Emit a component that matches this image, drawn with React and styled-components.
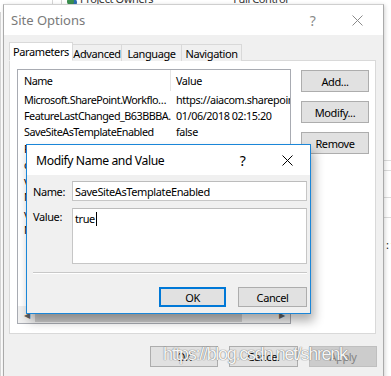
import React from "react";
import styled, { createGlobalStyle } from "styled-components";

const GlobalStyle = createGlobalStyle`
  html, body {
    margin: 0;
    padding: 0;
    background: #ffffff;
  }
  * {
    box-sizing: border-box;
  }
`;

const UI_FONT = `"Segoe UI", "Noto Sans", "Liberation Sans", sans-serif`;

const Screen = styled.div`
  position: relative;
  width: 391px;
  height: 376px;
  overflow: hidden;
  background: #ffffff;
  font-family: ${UI_FONT};
  font-size: 11px;
  letter-spacing: -0.4px;
  color: #000;
`;

/* the SharePoint page lying behind the windows */
const Backdrop = styled.div`
  position: absolute;
  inset: 0;
  display: grid;
  grid-template-columns: 3px 1fr 7px;
  grid-template-rows: 12px 1fr;
`;

const BackTop = styled.div`
  grid-column: 1 / 4;
  display: flex;
  align-items: flex-end;
  height: 12px;
  padding-bottom: 7px;
  line-height: 12px;
  color: #333;
`;

const BackRule = styled.span`
  width: 1px;
  align-self: stretch;
  background: #d6d6d6;
  margin-left: ${(p) => p.$ml}px;
`;

const BackText = styled.span`
  margin-left: ${(p) => p.$ml}px;
  white-space: nowrap;
`;

const BackIcon = styled.span`
  margin-left: 5px;
  width: 7px;
  height: 7px;
  border-radius: 50%;
  background: #3b8f4f;
  box-shadow: 3px 1px 0 #2b6cb0;
`;

const BackLeft = styled.div`
  border-left: 1px solid #d6d6d6;
`;

const BackRight = styled.div`
  grid-column: 3;
  display: flex;
  flex-direction: column;
  padding-top: 148px;
`;

const BackLine = styled.div`
  height: 1px;
  background: #dcdcdc;
  margin-bottom: ${(p) => p.$gap}px;
`;

const BackMark = styled.div`
  margin-top: 19px;
  padding-left: 2px;
  white-space: nowrap;
  color: #222;
`;

const Window = styled.div`
  position: absolute;
  left: ${(p) => p.$x}px;
  top: ${(p) => p.$y}px;
  width: ${(p) => p.$w}px;
  height: ${(p) => p.$h}px;
  display: flex;
  flex-direction: column;
  background: #f0f0f0;
  border: 1px solid ${(p) => (p.$active ? "#1a86d8" : "#aaaaaa")};
  border-top-color: ${(p) => (p.$active ? "#1a86d8" : "#cfcfcf")};
  box-shadow: ${(p) =>
    p.$active
      ? "3px 7px 10px rgba(0,0,0,0.32)"
      : "1px 1px 4px rgba(0,0,0,0.18)"};
`;

const TitleBar = styled.div`
  height: 30px;
  flex: none;
  display: flex;
  align-items: center;
  background: #ffffff;
  padding-left: ${(p) => p.$pl || 7}px;
  padding-right: ${(p) => p.$pr || 0}px;
`;

const TitleText = styled.div`
  flex: 1;
  font-size: ${(p) => (p.$active ? 12.2 : 13)}px;
  letter-spacing: ${(p) => (p.$active ? -0.4 : 0)}px;
  color: ${(p) => (p.$active ? "#000" : "#7a7a7a")};
  white-space: nowrap;
`;

const CaptionButton = styled.div`
  width: 45px;
  height: 30px;
  display: flex;
  align-items: center;
  justify-content: center;
  font-size: 14px;
  color: ${(p) => (p.$active ? "#000" : "#8a8a8a")};
`;

const CloseGlyph = ({ color }) => (
  <svg width="11" height="11" viewBox="0 0 11 11">
    <path d="M0.5 0.5 L10.5 10.5 M10.5 0.5 L0.5 10.5" stroke={color} strokeWidth="1" />
  </svg>
);

const OptionsBody = styled.div`
  flex: 1;
  display: flex;
  flex-direction: column;
  padding: 7px 6px 0 5px;
`;

const Tabs = styled.div`
  display: flex;
  align-items: flex-end;
  height: 19px;
  position: relative;
  z-index: 1;
`;

const Tab = styled.div`
  width: ${(p) => p.$w}px;
  height: ${(p) => (p.$selected ? 19 : 17)}px;
  display: flex;
  align-items: center;
  justify-content: center;
  background: ${(p) => (p.$selected ? "#ffffff" : "#f0f0f0")};
  border: 1px solid #d9d9d9;
  border-bottom: ${(p) => (p.$selected ? "1px solid #ffffff" : "none")};
  border-left: ${(p) => (p.$first || p.$selected ? "1px solid #d9d9d9" : "none")};
  white-space: nowrap;
`;

const Panel = styled.div`
  width: 367px;
  height: 274px;
  margin-top: -1px;
  display: flex;
  gap: 10px;
  padding: 8px 0 0 7px;
  background: #ffffff;
  border: 1px solid #d9d9d9;
`;

const ListView = styled.div`
  width: 274px;
  height: 255px;
  border: 1px solid #a8abb2;
  display: flex;
  flex-direction: column;
  overflow: hidden;
  background: #ffffff;
  font-size: 10.8px;
`;

const ListRow = styled.div`
  display: grid;
  grid-template-columns: 153px 1fr;
  height: ${(p) => (p.$header ? 21 : 16.3)}px;
  align-items: center;
  flex: none;
  white-space: nowrap;
`;

const Cell = styled.div`
  overflow: hidden;
  padding-left: ${(p) => (p.$first ? 6 : 5)}px;
  letter-spacing: ${(p) => (p.$first ? -0.5 : -0.4)}px;
  border-right: ${(p) => (p.$divider ? "1px solid #e5e5e5" : "none")};
  height: 100%;
  display: flex;
  align-items: center;
`;

const ListFill = styled.div`
  flex: 1;
`;

const HScroll = styled.div`
  height: 17px;
  flex: none;
  display: flex;
  align-items: center;
  background: #f0f0f0;
`;

const ScrollArrow = styled.div`
  width: 17px;
  display: flex;
  justify-content: center;
  color: #606060;
  font-size: 8px;
`;

const ScrollTrack = styled.div`
  flex: 1;
  height: 100%;
  display: flex;
  align-items: center;
`;

const ScrollThumb = styled.div`
  width: ${(p) => p.$w}%;
  height: 15px;
  background: #cdcdcd;
`;

const SideButtons = styled.div`
  display: flex;
  flex-direction: column;
  gap: 9px;
  padding-top: 1px;
`;

const Button = styled.div`
  width: ${(p) => p.$w || 68}px;
  height: ${(p) => p.$h || 22}px;
  display: flex;
  align-items: center;
  justify-content: center;
  background: ${(p) => (p.$disabled ? "#cccccc" : "#e1e1e1")};
  border: ${(p) =>
    p.$focused
      ? "2px solid #0078d7"
      : `1px solid ${p.$disabled ? "#bfbfbf" : "#adadad"}`};
  color: ${(p) => (p.$disabled ? "#838383" : "#000")};
`;

const Footer = styled.div`
  position: relative;
  display: flex;
  justify-content: flex-end;
  gap: 11px;
  padding-top: 12px;
`;

const Watermark = styled.div`
  position: absolute;
  left: 154px;
  top: 10px;
  font-family: "Liberation Sans", Arial, sans-serif;
  font-size: 18px;
  letter-spacing: -1.3px;
  color: rgba(255, 255, 255, 0.95);
  text-shadow: 0 0 1px rgba(90, 90, 90, 0.8), 0 0 1px rgba(90, 90, 90, 0.6);
  white-space: nowrap;
  pointer-events: none;
`;

const ModifyBody = styled.div`
  flex: 1;
  display: flex;
  flex-direction: column;
  padding: 6px 3px 0 6px;
`;

const FieldRow = styled.div`
  display: flex;
  align-items: ${(p) => (p.$top ? "flex-start" : "center")};
  margin-bottom: 7px;
`;

const FieldLabel = styled.div`
  width: 39px;
  padding-top: ${(p) => (p.$top ? 1 : 0)}px;
`;

const TextBox = styled.div`
  flex: 1;
  height: ${(p) => p.$h}px;
  background: #ffffff;
  border: 1px solid #c6c6c6;
  border-top-color: #bcbcbc;
  padding: ${(p) => (p.$multi ? "2px 2px" : "0 2px")};
  display: flex;
  align-items: ${(p) => (p.$multi ? "flex-start" : "center")};
  white-space: nowrap;
  overflow: hidden;
`;

const Caret = styled.span`
  display: inline-block;
  width: 1px;
  height: 14px;
  background: #000;
  margin-left: 1px;
  margin-top: 1px;
`;

const Separator = styled.div`
  height: 2px;
  border-top: 1px solid #c8c8c8;
  border-bottom: 1px solid #ffffff;
  margin-top: 1px;
`;

const DialogButtons = styled.div`
  display: flex;
  justify-content: flex-end;
  gap: 12px;
  padding-top: 13px;
`;

const props = [
  ["Microsoft.SharePoint.Workflo…", "https://aiacom.sharepoint.com/sites/ai"],
  ["FeatureLastChanged_B63BBBA…", "01/06/2018 02:15:20"],
  ["SaveSiteAsTemplateEnabled", "false"],
  ["FeatureLastChanged_4C4A8C…", "01/06/2018 02:15:20"],
  ["com_microsoft_sharepoint_…", "True"],
  ["vti_createdassociategroups", "3;4;5"],
  ["NoCrawl", "False"],
  ["vti_associatevisitorgroup", "5"],
  ["NavigationSettings", "<?xml version=\"1.0\""],
];

export default function App() {
  return (
    <Screen>
      <GlobalStyle />
      <Backdrop>
        <BackTop>
          <BackRule $ml={52} />
          <BackRule $ml={8} />
          <BackIcon />
          <BackText $ml={6}>Project Owners</BackText>
          <BackText $ml={80}>Full Control</BackText>
        </BackTop>
        <BackLeft />
        <div />
        <BackRight>
          <BackLine $gap={9} />
          <BackLine $gap={26} />
          <BackLine $gap={19} />
          <BackLine $gap={0} />
          <BackMark>: f</BackMark>
        </BackRight>
      </Backdrop>

      <Window $x={3} $y={4} $w={381} $h={390}>
        <TitleBar $pr={3}>
          <TitleText>Site Options</TitleText>
          <CaptionButton>?</CaptionButton>
          <CaptionButton>
            <CloseGlyph color="#8a8a8a" />
          </CaptionButton>
        </TitleBar>
        <OptionsBody>
          <Tabs>
            <Tab $w={64} $selected $first>Parameters</Tab>
            <Tab $w={49}>Advanced</Tab>
            <Tab $w={60}>Language</Tab>
            <Tab $w={60}>Navigation</Tab>
          </Tabs>
          <Panel>
            <ListView>
              <ListRow $header>
                <Cell $first $divider>Name</Cell>
                <Cell>Value</Cell>
              </ListRow>
              {props.map(([name, value]) => (
                <ListRow key={name}>
                  <Cell $first>{name}</Cell>
                  <Cell>{value}</Cell>
                </ListRow>
              ))}
              <ListFill />
              <HScroll>
                <ScrollArrow>&#9664;</ScrollArrow>
                <ScrollTrack>
                  <ScrollThumb $w={87} />
                </ScrollTrack>
                <ScrollArrow>&#9654;</ScrollArrow>
              </HScroll>
            </ListView>
            <SideButtons>
              <Button>Add...</Button>
              <Button>Modify...</Button>
              <Button>Remove</Button>
            </SideButtons>
          </Panel>
          <Footer>
            <Button $w={68} $h={21}>OK</Button>
            <Button $w={69} $h={21}>Cancel</Button>
            <Button $w={68} $h={21} $disabled>Apply</Button>
            <Watermark>https://blog.csdn.net/shrenk</Watermark>
          </Footer>
        </OptionsBody>
      </Window>

      <Window $x={26} $y={144} $w={285} $h={170} $active>
        <TitleBar $pl={9}>
          <TitleText $active>Modify Name and Value</TitleText>
          <CaptionButton $active>?</CaptionButton>
          <CaptionButton $active>
            <CloseGlyph color="#000" />
          </CaptionButton>
        </TitleBar>
        <ModifyBody>
          <FieldRow>
            <FieldLabel>Name:</FieldLabel>
            <TextBox $h={20}>SaveSiteAsTemplateEnabled</TextBox>
          </FieldRow>
          <FieldRow $top>
            <FieldLabel $top>Value:</FieldLabel>
            <TextBox $h={56} $multi>
              true
              <Caret />
            </TextBox>
          </FieldRow>
          <Separator />
          <DialogButtons>
            <Button $w={67} $h={20} $focused>OK</Button>
            <Button $w={69} $h={20}>Cancel</Button>
          </DialogButtons>
        </ModifyBody>
      </Window>
    </Screen>
  );
}
